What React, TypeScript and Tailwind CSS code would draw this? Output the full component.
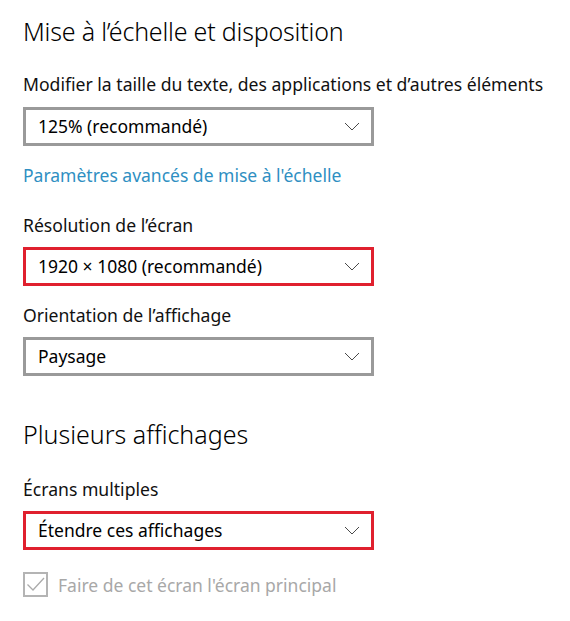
const font = { fontFamily: '"Noto Sans", "Open Sans", sans-serif' };

function Chevron() {
  return (
    <svg width="16" height="9" viewBox="0 0 16 9" className="shrink-0">
      <polyline points="1,1 8,8 15,1" fill="none" stroke="#4a4a4a" strokeWidth="1" />
    </svg>
  );
}

function Dropdown({ value, active }: { value: string; active?: boolean }) {
  return (
    <div
      className={`flex items-center justify-between w-[351px] h-[39px] border-[3px] pl-[12px] pr-[11px] bg-white ${
        active ? "border-[#e0202e]" : "border-[#9a9a9a]"
      }`}
    >
      <span className="text-[17.5px] text-black leading-none">{value}</span>
      <Chevron />
    </div>
  );
}

export default function App() {
  return (
    <div className="w-[570px] h-[621px] bg-white pl-[23px] pt-[15px] text-black" style={font}>
      <h1 className="text-[25px] font-light leading-[32px] tracking-[-0.2px]">Mise à l’échelle et disposition</h1>

      <p className="mt-[25px] text-[17.6px] leading-[24px] text-[#111]">Modifier la taille du texte, des applications et d’autres éléments</p>
      <div className="mt-[11px]">
        <Dropdown value="125% (recommandé)" />
      </div>

      <a className="block mt-[17px] text-[17.5px] leading-[24px] text-[#2f8fc2]">Paramètres avancés de mise à l'échelle</a>

      <p className="mt-[26px] text-[17.6px] leading-[24px] text-[#111]">Résolution de l’écran</p>
      <div className="mt-[10px]">
        <Dropdown value="1920 × 1080 (recommandé)" active />
      </div>

      <p className="mt-[17px] text-[17.6px] leading-[24px] text-[#111]">Orientation de l’affichage</p>
      <div className="mt-[10px]">
        <Dropdown value="Paysage" />
      </div>

      <h2 className="mt-[42px] text-[25px] font-light leading-[32px]">Plusieurs affichages</h2>

      <p className="mt-[27px] text-[17.6px] leading-[24px] text-[#111]">Écrans multiples</p>
      <div className="mt-[10px]">
        <Dropdown value="Étendre ces affichages" active />
      </div>

      <label className="mt-[22px] flex items-center gap-[10px]">
        <span className="w-[25px] h-[25px] border-2 border-[#b4b4b4] flex items-center justify-center">
          <svg width="21" height="21" viewBox="0 0 21 21">
            <polyline points="2.5,10.5 8,16 19,4" fill="none" stroke="#ababab" strokeWidth="1.3" />
          </svg>
        </span>
        <span className="text-[17.5px] leading-[24px] text-[#a8a8a8]">Faire de cet écran l'écran principal</span>
      </label>
    </div>
  );
}
